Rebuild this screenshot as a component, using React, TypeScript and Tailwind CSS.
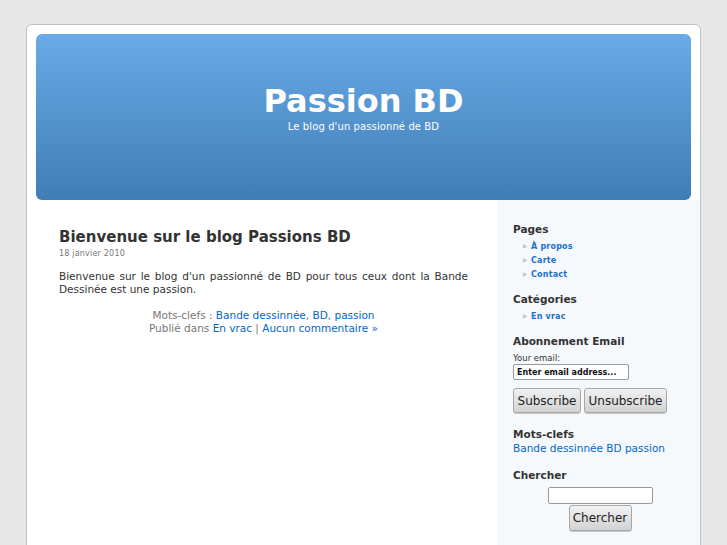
const font = { fontFamily: '"DejaVu Sans", Verdana, sans-serif' };

function SideHeading({ children, className = '' }: { children: React.ReactNode; className?: string }) {
  return <h2 className={`text-[10.5px] font-bold leading-[14px] text-[#333] ${className}`}>{children}</h2>;
}

function SideList({ items, className = '' }: { items: string[]; className?: string }) {
  return (
    <ul className={`pl-[9px] ${className}`}>
      {items.map((item) => (
        <li key={item} className="flex items-center text-[8px] leading-[14px]">
          <span className="w-[9px] text-[#999]">»</span>
          <a href="#" className="font-bold tracking-[0.2px] text-[#1a70cc]">
            {item}
          </a>
        </li>
      ))}
    </ul>
  );
}

const btn =
  'rounded-[3px] border border-[#a8a8a8] bg-gradient-to-b from-[#f2f2f2] to-[#d2d2d2] text-[12px] text-[#222] shadow-[0_1px_0_#c8c8c8]';

export default function App() {
  return (
    <div className="min-h-[545px] bg-[#e7e7e7] pt-[24px]" style={font}>
      <div className="mx-auto h-[540px] w-[675px] overflow-hidden rounded-t-[6px] border border-[#c2c2c2] bg-white">
        {/* header */}
        <div className="mx-[9px] mt-[9px] h-[166px] rounded-[6px] bg-gradient-to-b from-[#69abe7] to-[#3f7db7] pt-[48px] text-center text-white">
          <h1 className="text-[32px] font-bold leading-[39px]">Passion BD</h1>
          <p className="text-[10px] leading-[12px] tracking-[0.1px]">Le blog d'un passionné de BD</p>
        </div>

        <div className="flex h-full">
          {/* content */}
          <div className="w-[470px] pl-[32px] pr-[29px] pt-[27px] text-[#333]">
            <h2 className="text-[15px] font-bold leading-[20px] text-[#333]">Bienvenue sur le blog Passions BD</h2>
            <p className="mt-[1px] text-[8px] leading-[12px] tracking-[0.2px] text-[#777]">18 janvier 2010</p>
            <p className="mt-[10px] text-justify text-[10.5px] leading-[13px]">
              Bienvenue sur le blog d'un passionné de BD pour tous ceux dont la Bande Dessinée est une passion.
            </p>
            <div className="mt-[13px] text-center text-[10.5px] leading-[13px] text-[#777]">
              <p>
                Mots-clefs : <a href="#" className="text-[#0066cc]">Bande dessinnée</a>,{' '}
                <a href="#" className="text-[#0066cc]">BD</a>, <a href="#" className="text-[#0066cc]">passion</a>
              </p>
              <p>
                Publié dans <a href="#" className="text-[#0066cc]">En vrac</a> |{' '}
                <a href="#" className="text-[#0066cc]">Aucun commentaire »</a>
              </p>
            </div>
          </div>

          {/* sidebar */}
          <div className="w-[203px] bg-[#f6f9fc] pl-[16px] pr-[13px] pt-[22px]">
            <SideHeading>Pages</SideHeading>
            <SideList className="mt-[4px]" items={['À propos', 'Carte', 'Contact']} />

            <SideHeading className="mt-[10px]">Catégories</SideHeading>
            <SideList className="mt-[4px]" items={['En vrac']} />

            <SideHeading className="mt-[10px]">Abonnement Email</SideHeading>
            <p className="mt-[4px] text-[8.5px] leading-[12px] text-[#333]">Your email:</p>
            <input
              className="block h-[16px] w-[116px] rounded-[2px] border border-[#999] bg-white px-[3px] text-[8px] font-bold text-[#111] outline-none"
              style={font}
              defaultValue="Enter email address..."
            />
            <div className="mt-[8px] flex gap-[3px]">
              <button className={`${btn} h-[25px] w-[68px]`} style={font}>
                Subscribe
              </button>
              <button className={`${btn} h-[25px] w-[83px]`} style={font}>
                Unsubscribe
              </button>
            </div>

            <SideHeading className="mt-[14px]">Mots-clefs</SideHeading>
            <p className="text-[10.5px] leading-[14px] text-[#0066cc]">
              <a href="#">Bande dessinnée</a> <a href="#">BD</a> <a href="#">passion</a>
            </p>

            <SideHeading className="mt-[13px]">Chercher</SideHeading>
            <div className="mt-[5px] flex flex-col items-center">
              <input className="block h-[17px] w-[105px] rounded-[2px] border border-[#999] bg-white outline-none" />
              <button className={`${btn} mt-[1px] h-[26px] w-[63px]`} style={font}>
                Chercher
              </button>
            </div>
          </div>
        </div>
      </div>
    </div>
  );
}
